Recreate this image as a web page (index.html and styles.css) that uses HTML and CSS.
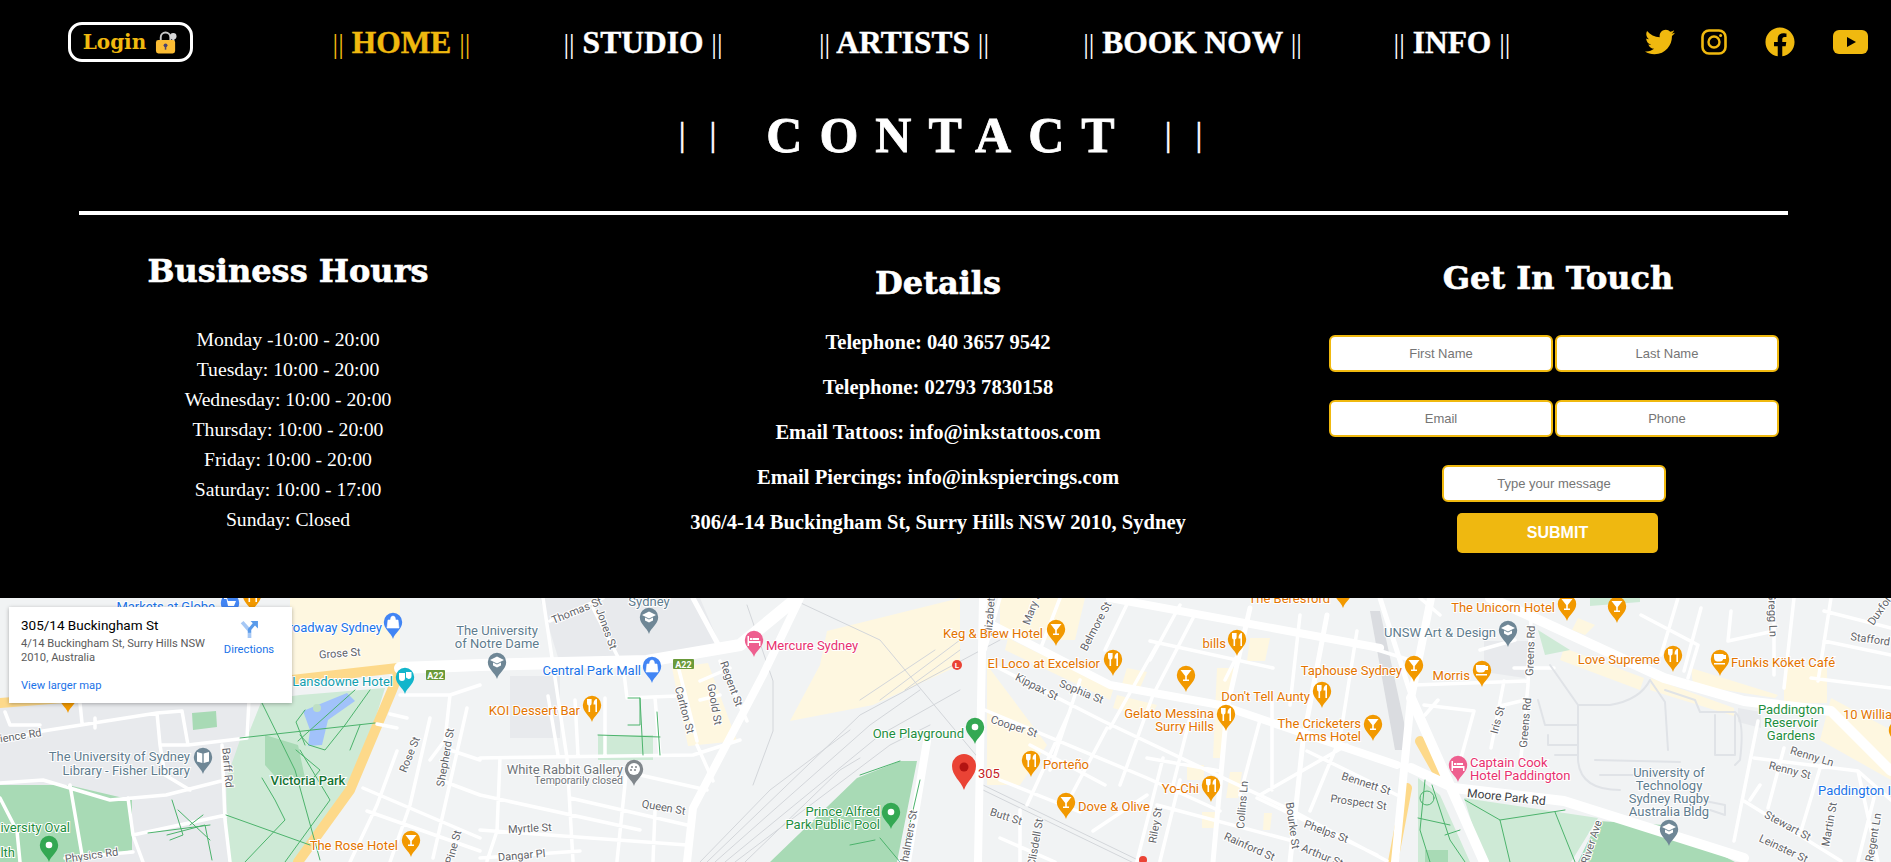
FILE: index.html
```html
<!DOCTYPE html>
<html lang="en">
<head>
    <meta charset="UTF-8">
    <meta name="viewport" content="width=device-width, initial-scale=1.0">
    <title>Contact</title>
    <link rel="stylesheet" href="styles.css">
</head>
<body>
    <section class="contact-top">
        <header class="top-bar">
            <a class="login-btn" href="#">Login
                <svg class="lock-icon" viewBox="0 0 24 24" width="23" height="24">
                    <path d="M6 12V7a5 5 0 0 1 10 0v5" fill="none" stroke="#c9c9c9" stroke-width="2"/>
                    <circle cx="19" cy="6" r="3.4" fill="#d8d8d8"/>
                    <path d="M18 8h2.2v7H18z" fill="#d8d8d8"/>
                    <rect x="1" y="10" width="20" height="14" rx="2.5" fill="#fbbc34"/>
                    <circle cx="11" cy="15.5" r="2" fill="#4b4470"/>
                    <path d="M10.2 16h1.6v4h-1.6z" fill="#4b4470"/>
                </svg>
            </a>
            <nav class="main-nav">
                <a class="nav-link active" href="#"><span class="bars">||</span> HOME <span class="bars">||</span></a>
                <a class="nav-link" href="#"><span class="bars">||</span> STUDIO <span class="bars">||</span></a>
                <a class="nav-link" href="#"><span class="bars">||</span> ARTISTS <span class="bars">||</span></a>
                <a class="nav-link" href="#"><span class="bars">||</span> BOOK NOW <span class="bars">||</span></a>
                <a class="nav-link" href="#"><span class="bars">||</span> INFO <span class="bars">||</span></a>
            </nav>
            <div class="socials">
                <svg class="icon-twitter" viewBox="0 0 512 512" width="30" height="30"><path d="M459.37 151.716c.325 4.548.325 9.097.325 13.645 0 138.72-105.583 298.558-298.558 298.558-59.452 0-114.68-17.219-161.137-47.106 8.447.974 16.568 1.299 25.34 1.299 49.055 0 94.213-16.568 130.274-44.832-46.132-.975-84.792-31.188-98.112-72.772 6.498.974 12.995 1.624 19.818 1.624 9.421 0 18.843-1.3 27.614-3.573-48.081-9.747-84.143-51.98-84.143-102.985v-1.299c13.969 7.797 30.214 12.67 47.431 13.319-28.264-18.843-46.781-51.005-46.781-87.391 0-19.492 5.197-37.36 14.294-52.954 51.655 63.675 129.3 105.258 216.365 109.807-1.624-7.797-2.599-15.918-2.599-24.04 0-57.828 46.782-104.934 104.934-104.934 30.213 0 57.502 12.67 76.67 33.137 23.715-4.548 46.456-13.32 66.599-25.34-7.798 24.366-24.366 44.833-46.132 57.827 21.117-2.273 41.584-8.122 60.426-16.243-14.292 20.791-32.161 39.308-52.628 54.253z"/></svg>
                <svg class="icon-insta" viewBox="0 0 26 26" width="26" height="26"><rect x="1.5" y="1.5" width="23" height="23" rx="6.5" fill="none" stroke-width="2.6"/><circle cx="13" cy="13" r="5.5" fill="none" stroke-width="2.4"/><circle cx="19.6" cy="6.4" r="1.5"/></svg>
                <svg class="icon-facebook" viewBox="0 0 512 512" width="30" height="30"><path d="M504 256C504 119 393 8 256 8S8 119 8 256c0 123.78 90.69 226.38 209.25 245V327.69h-63V256h63v-54.64c0-62.15 37-96.48 93.67-96.48 27.14 0 55.52 4.84 55.52 4.84v61h-31.28c-30.8 0-40.41 19.12-40.41 38.73V256h68.78l-11 71.69h-57.78V501C413.31 482.38 504 379.78 504 256z"/></svg>
                <svg class="icon-youtube" viewBox="0 0 35 24" width="35" height="24"><rect width="35" height="24" rx="6"/><path d="M14 7l9 5-9 5z" fill="#000"/></svg>
            </div>
        </header>

        <h1 class="page-title"><span class="title-bars">||</span><span class="title-text">CONTACT</span><span class="title-bars">||</span></h1>
        <hr class="divider">

        <div class="contact-cols">
            <div class="hours-col">
                <h2>Business Hours</h2>
                <p>Monday -10:00 - 20:00</p>
                <p>Tuesday: 10:00 - 20:00</p>
                <p>Wednesday: 10:00 - 20:00</p>
                <p>Thursday: 10:00 - 20:00</p>
                <p>Friday: 10:00 - 20:00</p>
                <p>Saturday: 10:00 - 17:00</p>
                <p>Sunday: Closed</p>
            </div>
            <div class="details-col">
                <h2>Details</h2>
                <p>Telephone: 040 3657 9542</p>
                <p>Telephone: 02793 7830158</p>
                <p>Email Tattoos: info@inkstattoos.com</p>
                <p>Email Piercings: info@inkspiercings.com</p>
                <p>306/4-14 Buckingham St, Surry Hills NSW 2010, Sydney</p>
            </div>
            <div class="touch-col">
                <h2>Get In Touch</h2>
                <form class="contact-form">
                    <div class="form-row">
                        <input type="text" placeholder="First Name">
                        <input type="text" placeholder="Last Name">
                    </div>
                    <div class="form-row">
                        <input type="email" placeholder="Email">
                        <input type="tel" placeholder="Phone">
                    </div>
                    <input class="message" type="text" placeholder="Type your message">
                    <button class="submit-btn" type="button">SUBMIT</button>
                </form>
            </div>
        </div>
    </section>

    <section class="map-wrap">
        <svg class="map" viewBox="0 598 1891 264" width="1891" height="264">
            <defs>
                <path id="pin" d="M0 16C-1.6 10-9.2 6.5-9.2-1A9.2 9.2 0 1 1 9.2-1C9.2 6.5 1.6 10 0 16Z"/>
                <g id="p-fork"><use href="#pin"/><path d="M-5-7v4q0 2 1.5 2.5V6h1.600V-.5q1.500-.5 1.500-2.500V-7M1.500-1.500q0-5.500 3.500-5.500V6H3.400V-1.500Z" fill="#fff"/></g>
                <g id="p-bar"><use href="#pin"/><path d="M-5.500-6H5.500L.8 0V3.500H3V5H-3V3.500H-.8V0Z" fill="#fff"/></g>
                <g id="p-cup"><use href="#pin"/><path d="M-6-6H3.500V-5H6V-1H3.300Q2.500 1.500 0 1.500H-3Q-6 1-6-3ZM-6 3H5V4.500H-6Z" fill="#fff"/></g>
                <g id="p-edu"><use href="#pin"/><path d="M0-6.500L7-3 0 .5-7-3ZM-4-.5L0 1.500 4-.5V2.500L0 4.500-4 2.500Z" fill="#fff"/></g>
                <g id="p-book"><use href="#pin"/><path d="M-6-6L-.7-4.500V5L-6 3.500ZM6-6L.7-4.500V5L6 3.500Z" fill="#fff"/></g>
                <g id="p-bag"><use href="#pin"/><path d="M-5-3H5L6 5H-6ZM-2.500-3Q-2.500-7 0-7T2.500-3" fill="#fff" stroke="#fff" stroke-width=".6"/></g>
                <g id="p-cart"><use href="#pin"/><path d="M-6-6H-3L-2-3H6L4 2H-2L-3.500-5H-6ZM-2 3.500H0V5.500H-2ZM2 3.500H4V5.500H2Z" fill="#fff"/></g>
                <g id="p-bed"><use href="#pin"/><path d="M-6.500-5H-5V0H6.500V5H5V2H-5V5H-6.500ZM-4-3H-1.500V-1H-4ZM-1-3H5V-1H-1Z" fill="#fff"/></g>
                <g id="p-dot"><use href="#pin"/><circle cy="-1" r="3.300" fill="#fff"/></g>
                <g id="p-art"><use href="#pin"/><circle cy="-1" r="6" fill="#fff"/><circle cx="-2" cy="-3" r="1"/><circle cx="2" cy="-3" r="1"/><circle cx="-3" cy="0" r="1"/><circle cx="1" cy="0" r="1"/></g>
                <g id="p-masks"><use href="#pin"/><path d="M-6-5H0V0Q0 3-3 3T-6 0ZM1-6H6.500V-2Q6.500 1 3.500 1L1-.5Z" fill="#fff"/></g>
            </defs>

            <rect x="0" y="598" width="1891" height="264" fill="#f1f3f4"/>

            <!-- grey blocks -->
            <path class="block-grey" d="M0 703H250V862H0ZM540 598H700L722 650 560 664ZM510 676H560V738H510ZM1484 641H1528L1525 678 1484 672ZM1738 708L1761 712V728L1738 722Z"/>
            <path class="block-rail" d="M1370 611L1380 611 1410 750 1395 750Z"/>

            <!-- shop / beige areas -->
            <path class="block-shop" d="M290 598H400V665L290 676ZM672 668L708 663 737 741 688 746ZM827 631L960 598V665L873 705 790 721 820 665ZM1000 598H1085L1075 640 1000 640ZM987 665L1047 745 1020 785H987ZM1008 638L1113 690 1110 700 1005 650ZM1117 695L1157 705 1150 718 1113 708ZM1127 668L1147 672 1140 688 1122 684ZM1217 668L1237 668 1220 758 1213 758ZM1187 765H1204V780H1187ZM1230 772H1242L1238 798H1226ZM1202 812H1215V828H1202ZM1250 638H1270L1265 661H1247ZM1264 813H1272L1270 830H1263ZM1564 648L1644 678 1640 690 1560 660ZM1578 618L1595 625 1585 635 1572 630ZM1651 678L1734 708 1734 716 1650 690ZM1691 668L1778 695 1775 698 1693 685ZM1784 665H1827V703H1784ZM1831 698L1891 730V780L1820 740Z"/>

            <!-- parks -->
            <path class="park-light" d="M262 700L300 695 385 688 375 720 345 790 298 862H228L226 780 240 740 248 735ZM598 735H653V760H598ZM1464 798L1598 818 1571 862H1484ZM1418 778L1440 795 1470 862H1418ZM1538 630L1570 650 1545 655ZM1590 598H1640V602L1590 606Z"/>
            <path class="park-dark" d="M265 735L298 745 305 778 280 782 265 765ZM0 785H68L132 800V850L75 862H0ZM192 713L216 711 217 727 193 730ZM770 862L857 778 900 761H917L897 862ZM1598 821L1664 825 1735 862H1578ZM1425 850H1448V862H1425Z"/>
            <path d="M303 711L347 693 355 701 328 720 322 745 308 746 310 730Z" fill="#a1c2fa"/>
            <circle cx="317" cy="708" r="4" fill="#bfe0c4"/>

            <!-- highways -->
            <path class="road-yellow" d="M0 703L292 680 398 668Q400 672 390 695L350 790 298 862M1407 788L1393 862M1420 741L1442 780"/>

            <!-- rail lines -->
            <path class="rail" d="M707 862L860 715 1000 640M715 862L870 725 920 690M725 862L880 735 960 690M735 862L890 745 930 725M745 862L840 770 860 758M700 862L770 790 850 730M747 605L773 681V731L753 785M790 598L880 640 980 760M983 785L1140 861M983 790L1140 866M860 700L935 650M880 700L960 640M905 690L960 650"/>

            <!-- big roads -->
            <path class="road r12" d="M400 668L480 665 647 661 740 645 797 598"/>
            <path class="road r10" d="M1528 615L1664 678 1744 701 1831 711 1891 771M1411 698L1484 862M1411 768L1454 788 1564 801 1744 858M1490 598L1528 615"/>
            <path class="road r8" d="M800 598L763 675 693 808 687 862M983 598L978 862M983 620L1110 685 1220 705 1397 765M1110 598L1380 648M1431 598L1411 698 1395 862M927 741L907 862"/>
            <path class="road r5" d="M693 598L720 648M1250 608L1227 708 1213 862M1327 615L1303 741 1290 862M1380 598L1412 698"/>

            <!-- streets -->
            <path class="road r4" d="M0 741L43 731 157 713 182 711 188 745 247 738 249 700M0 783L43 780 110 800 166 795 225 780M222 745L225 820 230 862M128 798L133 835 143 862M70 785L82 855M133 835L226 815M0 798L17 831 20 862M65 858L133 852M157 713L160 745 188 745M160 745L165 775 190 790M5 712L10 725H40M80 703L82 723M95 718V728
            M363 788L480 838M397 751L377 805 350 862M430 718L410 805 390 862M467 708L433 858M367 811L480 851M390 714L407 718M377 724L397 728M450 695L480 685M400 695L450 695 445 740 430 760M450 750L480 760M440 780L480 795
            M480 758L693 755 740 740M623 665L627 698 677 696M543 598L567 758 573 861M550 621L603 598M593 608L620 661M697 745L713 781M640 775L707 790M678 666L697 741M720 661L747 721M480 795L640 830M500 758L497 831 487 861M627 765L617 861M570 798L687 825M480 830L687 845M480 858L580 851M655 811L653 861M700 681L730 668M700 700L720 695M548 696L558 755M605 698V755M655 698L660 755M575 700L578 755
            M993 665L1103 721 1293 811 1387 861M980 708L1147 778 1220 811M1070 711L1027 805M1107 728L1063 811M1157 645L1110 728M1193 618L1153 695 1120 785M1147 758L1220 771M1163 758L1137 861M1190 718L1173 785M1150 641L1273 668M1357 631L1340 738 1310 811M1257 798L1377 855M1260 795L1347 745M1307 751L1397 795M1157 805L1293 841M1093 831L1147 795M1000 598L985 650M1060 598L1040 650M1130 598L1105 650M1180 605L1150 660M1240 650L1225 680M1300 615L1290 705M1000 780L1080 812M1030 745L1105 785M1080 680L1050 770M1180 780L1160 861M1260 720L1240 795M1000 838L1055 862M1020 810V862M1345 640L1410 660M1272 700V790
            M1531 621L1528 685 1521 758M1794 598L1784 688M1831 598L1818 681M1731 611L1728 641 1774 631M1774 598V675M1678 598L1661 655M1701 608L1684 671M1641 615L1698 645 1688 678M1824 611L1891 628M1824 641L1891 655M1811 678L1891 688M1758 721L1734 841M1754 758L1858 771 1878 862M1744 801L1841 861M1784 748L1768 808M1821 765L1801 831M1858 771L1891 800M1874 798L1858 861M1504 681L1491 748M1424 705L1474 711 1461 758M1514 668L1554 668M1414 685L1528 681M1438 700L1425 715M1500 706L1525 700M1420 598L1440 615M1480 650L1515 640M1750 800L1760 785"/>

            <!-- service roads in the park land -->
            <path class="lane" d="M1550 665L1578 705H1610Q1640 700 1650 680L1665 702 1668 750M1578 705V760Q1580 790 1620 790M1538 700L1545 725H1578M1548 735V745H1578M1555 755H1578M1595 760L1680 762M1600 775H1680M1665 690L1695 700 1700 712H1735M1715 715V755H1735V715 M1735 712Q1745 720 1740 760L1735 765M1700 800L1725 805 1725 815 1710 810"/>

            <!-- park paths -->
            <path class="path-green" d="M262 703L295 770 320 860M298 741L355 690M240 738L375 723M300 735L309 745 325 750 345 725 370 690M360 725L350 750M296 750L320 770 310 782M300 750L330 800 285 862M226 815L310 845M262 778L275 800 285 820 245 862M305 710L296 722 305 745M167 835L205 825 212 860M172 800L183 835 170 840M178 810L210 840M203 815L190 825M148 833L210 825M640 698L643 755M657 712L660 755M598 735L660 737M628 698H640V725H628M860 775L900 761M905 845L920 780M880 838L900 862M850 845L875 840M1425 780L1420 830 1430 862M1432 785L1450 840 1465 862M1418 818L1450 825M1465 800L1500 820 1510 862M1500 820L1565 810M1555 812L1575 862M1445 835L1460 830"/>
            <circle class="path-green" cx="1427" cy="798" r="7"/>

            <!-- street names -->
            <g class="street">
                <text x="42" y="736" transform="rotate(-9 42 736)" text-anchor="end">Science Rd</text>
                <text x="92" y="859" transform="rotate(-8 92 859)" text-anchor="middle">Physics Rd</text>
                <text x="224" y="768" transform="rotate(85 224 768)" text-anchor="middle">Barff Rd</text>
                <text x="340" y="657" transform="rotate(-4 340 657)" text-anchor="middle">Grose St</text>
                <text x="413" y="756" transform="rotate(-68 413 756)" text-anchor="middle">Rose St</text>
                <text x="449" y="758" transform="rotate(-80 449 758)" text-anchor="middle">Shepherd St</text>
                <text x="457" y="848" transform="rotate(-75 457 848)" text-anchor="middle">Pine St</text>
                <text x="530" y="832" transform="rotate(-3 530 832)" text-anchor="middle">Myrtle St</text>
                <text x="522" y="859" transform="rotate(-5 522 859)" text-anchor="middle">Dangar Pl</text>
                <text x="663" y="811" transform="rotate(10 663 811)" text-anchor="middle">Queen St</text>
                <text x="578" y="614" transform="rotate(-22 578 614)" text-anchor="middle">Thomas St</text>
                <text x="603" y="630" transform="rotate(70 603 630)" text-anchor="middle">Jones St</text>
                <text x="681" y="711" transform="rotate(75 681 711)" text-anchor="middle">Carlton St</text>
                <text x="711" y="705" transform="rotate(80 711 705)" text-anchor="middle">Goold St</text>
                <text x="728" y="685" transform="rotate(70 728 685)" text-anchor="middle">Regent St</text>
                <text x="912" y="840" transform="rotate(-80 912 840)" text-anchor="middle">Chalmers St</text>
                <text x="994" y="608" transform="rotate(-85 994 608)" text-anchor="middle">Elizabeth St</text>
                <text x="1036" y="608" transform="rotate(-70 1036 608)" text-anchor="middle">Mary St</text>
                <text x="1099" y="628" transform="rotate(-62 1099 628)" text-anchor="middle">Belmore St</text>
                <text x="1080" y="695" transform="rotate(22 1080 695)" text-anchor="middle">Sophia St</text>
                <text x="1035" y="690" transform="rotate(27 1035 690)" text-anchor="middle">Kippax St</text>
                <text x="1013" y="730" transform="rotate(18 1013 730)" text-anchor="middle">Cooper St</text>
                <text x="1005" y="820" transform="rotate(18 1005 820)" text-anchor="middle">Butt St</text>
                <text x="1039" y="843" transform="rotate(-80 1039 843)" text-anchor="middle">Clisdell St</text>
                <text x="1159" y="826" transform="rotate(-80 1159 826)" text-anchor="middle">Riley St</text>
                <text x="1246" y="805" transform="rotate(-85 1246 805)" text-anchor="middle">Collins Ln</text>
                <text x="1289" y="826" transform="rotate(82 1289 826)" text-anchor="middle">Bourke St</text>
                <text x="1248" y="850" transform="rotate(24 1248 850)" text-anchor="middle">Rainford St</text>
                <text x="1365" y="787" transform="rotate(18 1365 787)" text-anchor="middle">Bennett St</text>
                <text x="1358" y="806" transform="rotate(8 1358 806)" text-anchor="middle">Prospect St</text>
                <text x="1325" y="835" transform="rotate(20 1325 835)" text-anchor="middle">Phelps St</text>
                <text x="1321" y="859" transform="rotate(22 1321 859)" text-anchor="middle">Arthur St</text>
                <text x="1501" y="721" transform="rotate(-75 1501 721)" text-anchor="middle">Iris St</text>
                <text x="1534" y="651" transform="rotate(-88 1534 651)" text-anchor="middle">Greens Rd</text>
                <text x="1529" y="723" transform="rotate(-85 1529 723)" text-anchor="middle">Greens Rd</text>
                <text class="street-dark" x="1506" y="801" transform="rotate(6 1506 801)" text-anchor="middle">Moore Park Rd</text>
                <text x="1595" y="843" transform="rotate(-72 1595 843)" text-anchor="middle">River Ave</text>
                <text x="1811" y="760" transform="rotate(17 1811 760)" text-anchor="middle">Renny Ln</text>
                <text x="1789" y="774" transform="rotate(14 1789 774)" text-anchor="middle">Renny St</text>
                <text x="1786" y="829" transform="rotate(28 1786 829)" text-anchor="middle">Stewart St</text>
                <text x="1833" y="825" transform="rotate(-80 1833 825)" text-anchor="middle">Martin St</text>
                <text x="1782" y="852" transform="rotate(25 1782 852)" text-anchor="middle">Leinster St</text>
                <text x="1877" y="838" transform="rotate(-80 1877 838)" text-anchor="middle">Regent Ln</text>
                <text x="1850" y="640" transform="rotate(8 1850 640)">Stafford St</text>
                <text x="1769" y="615" transform="rotate(88 1769 615)" text-anchor="middle">Gregg Ln</text>
                <text x="1888" y="605" transform="rotate(-55 1888 605)" text-anchor="middle">Duxford St</text>
            </g>

            <!-- road badges -->
            <rect class="badge" x="673" y="659" width="21" height="10" rx="1"/>
            <text class="badge-text" x="683.5" y="667.5" text-anchor="middle">A22</text>
            <rect class="badge" x="426" y="670" width="19" height="10" rx="1"/>
            <text class="badge-text" x="435.5" y="678.5" text-anchor="middle">A22</text>

            <!-- pins -->
            <g class="orange">
                <use href="#p-fork" x="252" y="596"/>
                <use href="#p-dot" x="68" y="697"/>
                <use href="#p-bar" x="411" y="841"/>
                <use href="#p-fork" x="592" y="706"/>
                <use href="#p-bar" x="1056" y="630"/>
                <use href="#p-fork" x="1113" y="660"/>
                <use href="#p-fork" x="1237" y="640"/>
                <use href="#p-bar" x="1186" y="676"/>
                <use href="#p-fork" x="1226" y="715"/>
                <use href="#p-fork" x="1322" y="692"/>
                <use href="#p-bar" x="1414" y="666"/>
                <use href="#p-bar" x="1373" y="725"/>
                <use href="#p-bar" x="1343" y="592"/>
                <use href="#p-bar" x="1567" y="605"/>
                <use href="#p-bar" x="1617" y="607"/>
                <use href="#p-cup" x="1482" y="671"/>
                <use href="#p-fork" x="1673" y="656"/>
                <use href="#p-cup" x="1720" y="660"/>
                <use href="#p-fork" x="1031" y="761"/>
                <use href="#p-fork" x="1211" y="786"/>
                <use href="#p-bar" x="1066" y="803"/>
                <use href="#p-dot" x="1898" y="731"/>
            </g>
            <g class="blue">
                <use href="#p-cart" x="230" y="604"/>
                <use href="#p-bag" x="393" y="623"/>
                <use href="#p-bag" x="652" y="667"/>
            </g>
            <g class="slate">
                <use href="#p-edu" x="497" y="663"/>
                <use href="#p-book" x="203" y="758"/>
                <use href="#p-edu" x="649" y="618"/>
                <use href="#p-edu" x="1508" y="631"/>
                <use href="#p-edu" x="1669" y="830"/>
            </g>
            <g class="grey"><use href="#p-art" x="634" y="770"/></g>
            <g class="teal"><use href="#p-masks" x="405" y="678"/></g>
            <g class="pink">
                <use href="#p-bed" x="754" y="641"/>
                <use href="#p-bed" x="1458" y="766"/>
            </g>
            <g class="green">
                <use href="#p-dot" x="975" y="728"/>
                <use href="#p-dot" x="891" y="813"/>
                <use href="#p-dot" x="49" y="846"/>
            </g>

            <!-- the marker -->
            <path d="M964 790C961 781 952 776 952 766A12 12 0 1 1 976 766C976 776 967 781 964 790Z" fill="#ea4335"/>
            <circle cx="964" cy="767" r="4.5" fill="#b31412"/>
            <circle cx="1143" cy="860" r="4" fill="#ea4335"/>
            <circle cx="957" cy="665" r="5" fill="#ea4335"/>
            <text class="lbl-metro" x="957" y="668" text-anchor="middle">L</text>

            <!-- place names -->
            <g class="lbl lbl-orange" text-anchor="end">
                <text x="398" y="850">The Rose Hotel</text>
                <text x="580" y="715">KOI Dessert Bar</text>
                <text x="1043" y="638">Keg &amp; Brew Hotel</text>
                <text x="1100" y="668">El Loco at Excelsior</text>
                <text x="1226" y="648">bills</text>
                <text x="1214" y="718">Gelato Messina</text>
                <text x="1214" y="731">Surry Hills</text>
                <text x="1310" y="701">Don't Tell Aunty</text>
                <text x="1402" y="675">Taphouse Sydney</text>
                <text x="1361" y="728">The Cricketers</text>
                <text x="1361" y="741">Arms Hotel</text>
                <text x="1330" y="603">The Beresford</text>
                <text x="1555" y="612">The Unicorn Hotel</text>
                <text x="1470" y="680">Morris</text>
                <text x="1660" y="664">Love Supreme</text>
                <text x="1199" y="793">Yo-Chi</text>
            </g>
            <g class="lbl lbl-orange">
                <text x="1731" y="667">Funkis Köket Café</text>
                <text x="1043" y="769">Porteño</text>
                <text x="1078" y="811">Dove &amp; Olive</text>
                <text x="1843" y="719">10 William</text>
            </g>
            <g class="lbl lbl-blue">
                <text x="215" y="611" text-anchor="end">Markets at Globe</text>
                <text x="382" y="632" text-anchor="end">Broadway Sydney</text>
                <text x="641" y="675" text-anchor="end">Central Park Mall</text>
                <text x="1818" y="795">Paddington Inn</text>
            </g>
            <g class="lbl lbl-teal"><text x="393" y="686" text-anchor="end">Lansdowne Hotel</text></g>
            <g class="lbl lbl-slate">
                <text x="497" y="635" text-anchor="middle">The University</text>
                <text x="497" y="648" text-anchor="middle">of Notre Dame</text>
                <text x="649" y="606" text-anchor="middle">Sydney</text>
                <text x="190" y="761" text-anchor="end">The University of Sydney</text>
                <text x="190" y="775" text-anchor="end">Library - Fisher Library</text>
                <text x="1496" y="637" text-anchor="end">UNSW Art &amp; Design</text>
                <text x="1669" y="777" text-anchor="middle">University of</text>
                <text x="1669" y="790" text-anchor="middle">Technology</text>
                <text x="1669" y="803" text-anchor="middle">Sydney Rugby</text>
                <text x="1669" y="816" text-anchor="middle">Australia Bldg</text>
            </g>
            <g class="lbl lbl-grey" text-anchor="end">
                <text x="623" y="774">White Rabbit Gallery</text>
                <text class="lbl-small" x="623" y="784">Temporarily closed</text>
            </g>
            <g class="lbl lbl-pink">
                <text x="766" y="650">Mercure Sydney</text>
                <text x="1470" y="767">Captain Cook</text>
                <text x="1470" y="780">Hotel Paddington</text>
            </g>
            <g class="lbl lbl-green">
                <text x="964" y="738" text-anchor="end">One Playground</text>
                <text x="880" y="816" text-anchor="end">Prince Alfred</text>
                <text x="880" y="829" text-anchor="end">Park Public Pool</text>
                <text x="1791" y="714" text-anchor="middle">Paddington</text>
                <text x="1791" y="727" text-anchor="middle">Reservoir</text>
                <text x="1791" y="740" text-anchor="middle">Gardens</text>
                <text x="70" y="832" text-anchor="end">University Oval</text>
                <text x="15" y="857" text-anchor="end">Health</text>
                <text class="lbl-park" x="308" y="785" text-anchor="middle">Victoria Park</text>
            </g>
            <text class="lbl lbl-red" x="978" y="778">305</text>
        </svg>

        <div class="place-card">
            <div class="place-info">
                <div class="place-name">305/14 Buckingham St</div>
                <div class="place-address">4/14 Buckingham St, Surry Hills NSW 2010, Australia</div>
                <a class="place-link" href="#">View larger map</a>
            </div>
            <a class="place-directions" href="#">
                <svg viewBox="0 0 18 18" width="19" height="19">
                    <path d="M9 17V10L2 2" fill="none" stroke="#a6c8f5" stroke-width="3.5"/>
                    <path d="M9 12V9L14 3" fill="none" stroke="#5a9bea" stroke-width="3"/>
                    <path d="M10 1H17V8Z" fill="#5a9bea"/>
                </svg>
                Directions
            </a>
        </div>
    </section>
</body>
</html>
```

FILE: styles.css
```css
body {
    margin: 0;
    background-color: #000;
    color: #fff;
    font-family: "Liberation Serif", serif;
    overflow: hidden;
}

a {
    text-decoration: none;
    color: inherit;
}

.contact-top {
    height: 598px;
    box-sizing: border-box;
    padding-top: 22px;
}

/* header */
.top-bar {
    display: flex;
    align-items: center;
    height: 40px;
    padding: 0 23px 0 68px;
}

.login-btn {
    display: flex;
    align-items: center;
    justify-content: center;
    gap: 9px;
    box-sizing: border-box;
    width: 125px;
    height: 40px;
    border: 3px solid #fff;
    border-radius: 14px;
    color: #f0b90f;
    font-family: "DejaVu Serif", serif;
    font-size: 20px;
    font-weight: bold;
}

.main-nav {
    display: grid;
    grid-template-columns: 139px 158px 178px 213px 120px;
    justify-items: center;
    gap: 93px;
    margin-left: 139px;
    padding-top: 2px;
}

.nav-link {
    font-size: 31.5px;
    font-weight: bold;
    line-height: 44px;
    white-space: nowrap;
    -webkit-text-stroke: 0.4px currentColor;
}

.nav-link.active {
    color: #f0b90f;
}

.bars {
    font-weight: normal;
    font-size: 28px;
    -webkit-text-stroke: 0;
}

.socials {
    display: flex;
    align-items: center;
    gap: 38px;
    margin-left: auto;
    fill: #f0b90f;
    stroke: #f0b90f;
}

.socials svg {
    stroke-width: 0;
}

.socials .icon-insta {
    margin-left: -12px;
}

/* title */
.page-title {
    display: flex;
    justify-content: center;
    align-items: center;
    gap: 50px;
    height: 60px;
    margin: 43px 0 0;
    padding-right: 10px;
    font-size: 50px;
    line-height: 60px;
}

.title-text {
    letter-spacing: 17px;
    margin-right: -17px;
    -webkit-text-stroke: 0.8px #fff;
}

.title-bars {
    font-size: 34px;
    font-weight: normal;
    letter-spacing: 24px;
    margin-right: -24px;
    -webkit-text-stroke: 0.5px #fff;
}

.divider {
    width: 1709px;
    height: 4px;
    margin: 46px 0 0 79px;
    border: 0;
    background-color: #fff;
}

/* three columns */
.contact-cols {
    display: grid;
    grid-template-columns: 576px 724px 516px;
    text-align: center;
}

.contact-cols h2 {
    margin: 0;
    font-family: "DejaVu Serif", serif;
    font-size: 32px;
    line-height: 36px;
    font-weight: bold;
    -webkit-text-stroke: 0.6px #fff;
}

.contact-cols p {
    margin: 0;
}

.hours-col {
    padding-top: 38px;
}

.hours-col h2 {
    margin-bottom: 35px;
}

.hours-col p {
    font-size: 19.7px;
    line-height: 30px;
}

.details-col {
    padding-top: 50px;
}

.details-col h2 {
    margin-bottom: 30px;
}

.contact-cols .details-col p {
    font-size: 20.6px;
    line-height: 23px;
    margin-bottom: 22px;
    font-weight: bold;
}

.touch-col {
    padding-top: 45px;
}

.touch-col h2 {
    margin-bottom: 39px;
}

.contact-form {
    width: 450px;
    margin-left: 29px;
    font-family: "Liberation Sans", sans-serif;
}

.form-row {
    display: flex;
    gap: 2px;
    margin-bottom: 28px;
}

.contact-form input {
    box-sizing: border-box;
    width: 224px;
    height: 37px;
    padding: 0 4px;
    border: 2px solid #f0b90f;
    border-radius: 6px;
    background-color: #fff;
    font-family: "Liberation Sans", sans-serif;
    font-size: 13px;
    text-align: center;
}

.contact-form .message {
    display: block;
    margin-left: 113px;
}

.submit-btn {
    display: block;
    width: 201px;
    height: 40px;
    margin: 11px 0 0 128px;
    border: none;
    border-radius: 5px;
    background-color: #efb810;
    color: #fff;
    font-family: "Liberation Sans", sans-serif;
    font-size: 16px;
    font-weight: bold;
}

/* map */
.map-wrap {
    position: relative;
    height: 264px;
    overflow: hidden;
}

.map {
    display: block;
    font-family: Roboto, sans-serif;
}

.block-grey { fill: #e8eaed; }
.block-rail { fill: #dadce0; }
.block-shop { fill: #fef7e0; }
.park-light { fill: #ceead6; }
.park-dark { fill: #a8dab5; }

.road,
.road-yellow,
.rail,
.lane,
.path-green {
    fill: none;
    stroke-linecap: round;
    stroke-linejoin: round;
}

.road { stroke: #fff; }
.r12 { stroke-width: 12; }
.r10 { stroke-width: 10; }
.r8 { stroke-width: 8; }
.r5 { stroke-width: 5; }
.r4 { stroke-width: 3.5; }

.road-yellow {
    stroke: #fdd98a;
    stroke-width: 10;
}

.rail {
    stroke: #d3d6da;
    stroke-width: 1;
}

.lane {
    stroke: #e0e3e7;
    stroke-width: 2;
}

.path-green {
    stroke: #4cb36c;
    stroke-width: 1;
}

.street text {
    font-size: 11px;
    fill: #5f6368;
    stroke: #fff;
    stroke-width: 2px;
    paint-order: stroke;
}

.street .street-dark {
    font-size: 12px;
    fill: #3c4043;
}

.badge { fill: #6a9a3a; }

.badge-text {
    font-size: 9px;
    font-weight: bold;
    fill: #fff;
}

.orange { fill: #f29900; }
.blue { fill: #4285f4; }
.slate { fill: #6f8796; }
.grey { fill: #80868b; }
.teal { fill: #12b5cb; }
.pink { fill: #ee5f8f; }
.green { fill: #34a853; }

.lbl {
    font-size: 13px;
    stroke: #fff;
    stroke-width: 2px;
    paint-order: stroke;
}

.lbl-orange { fill: #e37400; }
.lbl-blue { fill: #1a73e8; }
.lbl-teal { fill: #129eaf; }
.lbl-slate { fill: #5e7c8e; }
.lbl-grey { fill: #70757a; }
.lbl-pink { fill: #e8316f; }
.lbl-green { fill: #1e8e3e; }
.lbl-red { fill: #c5221f; }
.lbl-small { font-size: 10.5px; }

.lbl-park {
    fill: #137333;
    font-weight: 500;
}

.lbl-metro {
    font-size: 8px;
    font-weight: bold;
    fill: #fff;
}

.place-card {
    position: absolute;
    left: 9px;
    top: 9px;
    display: flex;
    box-sizing: border-box;
    width: 283px;
    height: 96px;
    padding: 9px 12px;
    background-color: #fff;
    box-shadow: 0 1px 4px rgba(0, 0, 0, 0.3);
    font-family: Roboto, sans-serif;
    font-size: 11.2px;
}

.place-info {
    width: 196px;
}

.place-name {
    color: #000;
    font-size: 13.5px;
    line-height: 18px;
}

.place-address {
    margin-top: 3px;
    color: #5b5b5b;
    line-height: 14px;
}

.place-link,
.place-directions {
    color: #1a73e8;
}

.place-link {
    display: block;
    margin-top: 14px;
}

.place-directions {
    display: flex;
    flex-direction: column;
    align-items: center;
    flex: none;
    gap: 4px;
    width: 62px;
    margin-left: 1px;
    padding-top: 4px;
}
```
